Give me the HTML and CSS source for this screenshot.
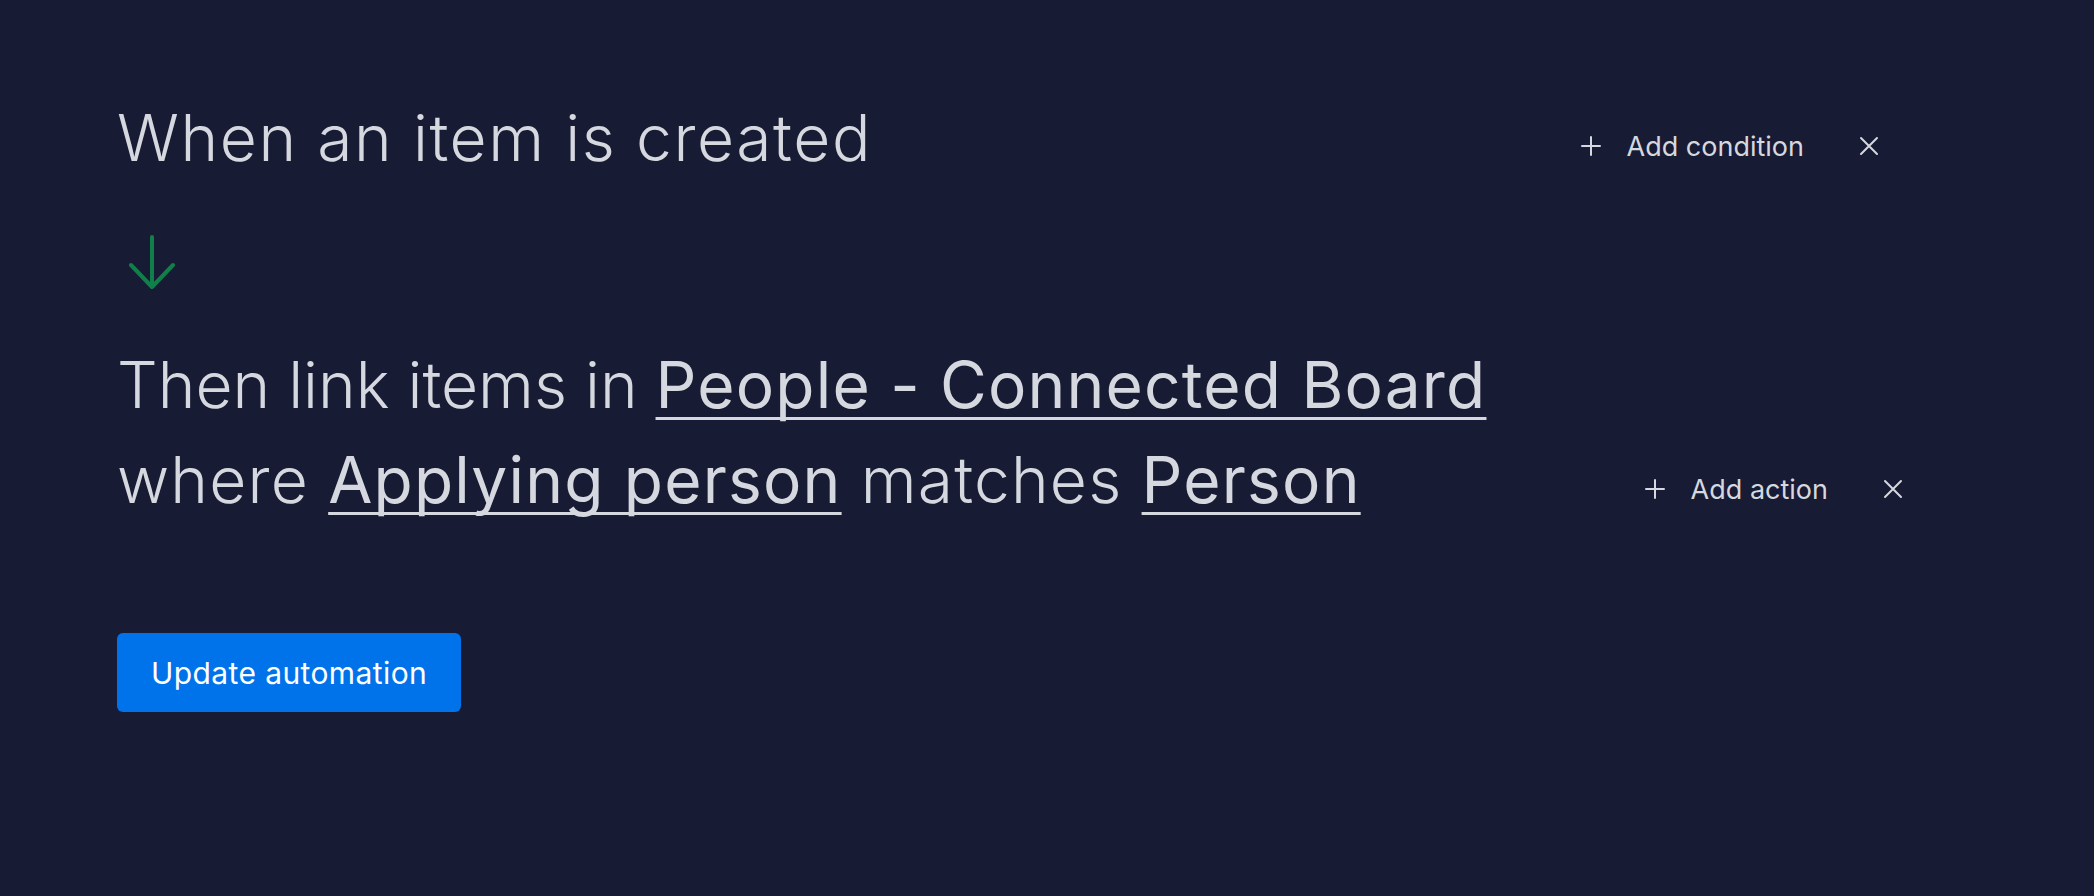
FILE: index.html
```html
<!DOCTYPE html>
<html lang="en">
<head>
<meta charset="utf-8">
<title>Automation</title>
<link rel="stylesheet" href="styles.css">
</head>
<body>
<main class="editor">
  <div class="row row-trigger">
    <h2 class="sentence sentence-trigger">When an item is created</h2>
    <div class="actions">
      <button class="add-btn" type="button">
        <svg class="icon" viewBox="0 0 20 20" width="20" height="20"><path d="M10 1V19M1 10H19"/></svg>
        <span>Add condition</span>
      </button>
      <button class="close-btn" type="button" aria-label="Remove">
        <svg class="icon" viewBox="0 0 20 20" width="20" height="20"><path d="M2 2L18 18M18 2L2 18"/></svg>
      </button>
    </div>
  </div>

  <div class="arrow">
    <svg viewBox="0 0 46 54" width="46" height="54"><path d="M23 2V52M2 30L23 52L44 30"/></svg>
  </div>

  <div class="row row-action">
    <p class="sentence"><span class="lead">Then link items in </span><span class="token">People - Connected Board</span><br>where <span class="token">Applying person</span> matches <span class="token">Person</span></p>
    <div class="actions actions-bottom">
      <button class="add-btn" type="button">
        <svg class="icon" viewBox="0 0 20 20" width="20" height="20"><path d="M10 1V19M1 10H19"/></svg>
        <span>Add action</span>
      </button>
      <button class="close-btn" type="button" aria-label="Remove">
        <svg class="icon" viewBox="0 0 20 20" width="20" height="20"><path d="M2 2L18 18M18 2L2 18"/></svg>
      </button>
    </div>
  </div>

  <button class="primary-btn" type="button">Update automation</button>
</main>
</body>
</html>
```

FILE: styles.css
```css
html, body {
  margin: 0;
  padding: 0;
  background: #181b34;
  height: 100%;
}

body {
  color: #d5d8df;
  font-family: Inter, "Noto Sans", sans-serif;
}

.editor {
  padding: 90px 191px 0 117px;
  display: flex;
  flex-direction: column;
  align-items: flex-start;
}

.row {
  display: flex;
  justify-content: space-between;
  align-items: flex-start;
  align-self: stretch;
}

.row-trigger {
  padding-right: 24px;
}

.sentence {
  margin: 0;
  font-family: Inter, "Noto Sans", sans-serif;
  font-size: 64px;
  font-weight: 300;
  line-height: 95px;
  letter-spacing: 1.2px;
  color: #d5d8df;
}

.sentence-trigger {
  letter-spacing: 1.6px;
}

.lead {
  letter-spacing: 0;
}

.token {
  font-weight: 400;
  text-decoration: underline;
  text-decoration-thickness: 3px;
  text-underline-offset: 9px;
  text-decoration-skip-ink: none;
}

.actions {
  display: flex;
  align-items: center;
  gap: 55px;
  height: 40px;
  margin-top: 36px;
}

.actions-bottom {
  align-self: flex-end;
  margin-top: 0;
  margin-bottom: 18px;
}

.add-btn,
.close-btn {
  display: flex;
  align-items: center;
  background: none;
  border: 0;
  padding: 0;
  color: #d5d8df;
  font-family: Inter, "Noto Sans", sans-serif;
  font-size: 27px;
  font-weight: 400;
  cursor: pointer;
}

.add-btn {
  gap: 26px;
}

.icon {
  display: block;
  fill: none;
  stroke: #d5d8df;
  stroke-width: 2;
  stroke-linecap: round;
}

.arrow {
  margin: 50px 0 48px 12px;
}

.arrow svg {
  display: block;
  fill: none;
  stroke: #10804b;
  stroke-width: 4;
  stroke-linecap: round;
  stroke-linejoin: round;
}

.primary-btn {
  margin-top: 106px;
  height: 79px;
  padding: 0 34px;
  border: 0;
  border-radius: 6px;
  background: #0073ea;
  color: #ffffff;
  font-family: Inter, "Noto Sans", sans-serif;
  font-size: 30px;
  font-weight: 400;
  letter-spacing: 0.4px;
  cursor: pointer;
}
```
